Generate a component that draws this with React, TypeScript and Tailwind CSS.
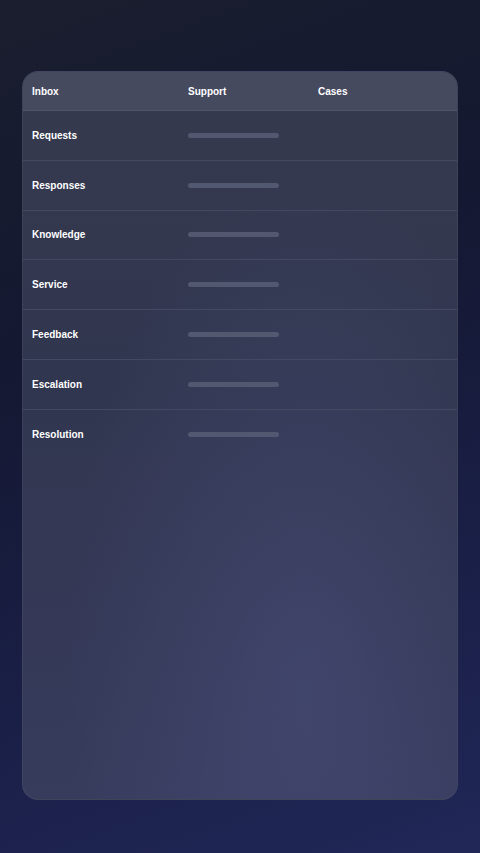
const rows = ["Requests", "Responses", "Knowledge", "Service", "Feedback", "Escalation", "Resolution"];

export default function App() {
  return (
    <div
      className="min-h-[853px] w-full bg-[linear-gradient(160deg,#1a1e2e_0%,#141831_35%,#1a1f47_70%,#212757_100%)] px-[22px] pt-[71px] pb-[53px]"
      style={{ fontFamily: '"Liberation Sans", Arial, sans-serif' }}
    >
      <div className="relative h-[729px] overflow-hidden rounded-2xl border border-white/5 bg-[linear-gradient(180deg,#353a4e_0%,#313650_45%,#373b5c_100%)]">
        <div className="pointer-events-none absolute inset-0 bg-[radial-gradient(ellipse_at_65%_85%,rgba(90,95,150,0.3),transparent_60%)]" />

        <div className="relative">
          {/* Header */}
          <div className="grid h-[39px] grid-cols-[156px_130px_1fr] items-center border-b border-white/5 bg-[#464a5f] px-[9px] text-[10px] font-bold text-white">
            <span>Inbox</span>
            <span>Support</span>
            <span>Cases</span>
          </div>

          {/* Rows */}
          {rows.map((label, i) => (
            <div
              key={label}
              className={`grid h-[49.8px] grid-cols-[156px_130px_1fr] items-center px-[9px] ${
                i < rows.length - 1 ? "border-b border-[#444961]" : ""
              }`}
            >
              <span className="text-[10px] font-bold text-white">{label}</span>
              <div className="h-[5px] w-[91px] rounded-full bg-[#535871]" />
              <span />
            </div>
          ))}
        </div>
      </div>
    </div>
  );
}
